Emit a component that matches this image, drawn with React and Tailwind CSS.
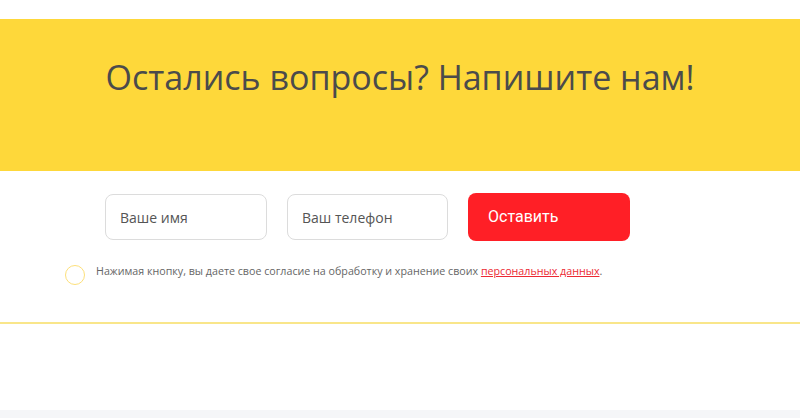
import React from 'react';

const App = () => {
  return (
    <div className="w-[800px] h-[418px] bg-white overflow-hidden flex flex-col" style={{ fontFamily: '"Open Sans", sans-serif' }}>
      <div className="h-[19px] bg-white" />

      {/* Banner */}
      <section className="h-[152px] bg-[#fed83a] pt-[37px]">
        <h2 className="text-center text-[34px] leading-[42px] text-[#4b4b4b] font-normal">
          Остались вопросы? Напишите нам!
        </h2>
      </section>

      {/* Form */}
      <section className="pt-[22px] h-[153px] border-b-2 border-[#f9e68a]">
        <form className="flex items-start gap-[20px] pl-[105px]">
          <input
            type="text"
            placeholder="Ваше имя"
            className="w-[162px] h-[46px] mt-[1px] rounded-[8px] border border-[#dcdcdc] bg-white px-[14px] text-[14px] text-[#444] placeholder:text-[#555] outline-none"
          />
          <input
            type="tel"
            placeholder="Ваш телефон"
            className="w-[161px] h-[46px] mt-[1px] rounded-[8px] border border-[#dcdcdc] bg-white px-[14px] text-[14px] text-[#444] placeholder:text-[#555] outline-none"
          />
          <button
            type="button"
            className="w-[162px] h-[48px] rounded-[8px] bg-[#ff1f26] text-white text-left pl-[20px] text-[16px]"
            style={{ fontFamily: 'Roboto, "Liberation Sans", sans-serif' }}
          >
            Оставить
          </button>
        </form>

        <label className="flex items-center gap-[11px] pl-[65px] mt-[24px]">
          <span className="w-[20px] h-[20px] rounded-full border-[1.5px] border-[#fde07a] shrink-0" />
          <span className="text-[10.7px] text-[#666] -mt-[8px]">
            Нажимая кнопку, вы даете свое согласие на обработку и хранение своих{' '}
            <a href="#" className="text-[#ec2a33] underline">персональных данных</a>.
          </span>
        </label>
      </section>

      <div className="flex-1 bg-white" />
      <div className="h-[8px] bg-[#f5f6f8]" />
    </div>
  );
};

export default App;
